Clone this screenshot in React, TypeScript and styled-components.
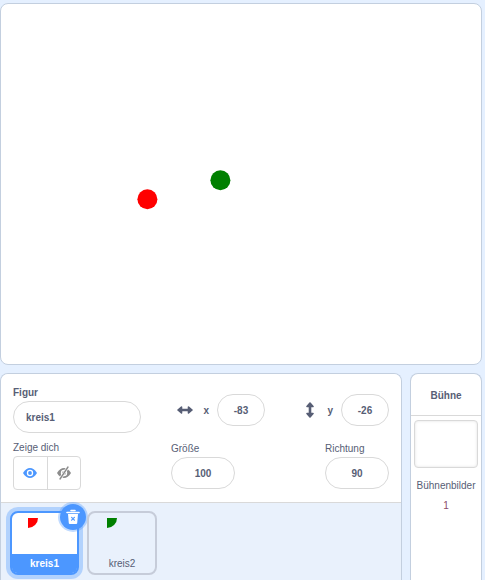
import React from 'react';
import styled, { createGlobalStyle } from 'styled-components';

const GlobalStyle = createGlobalStyle`
  html, body {
    margin: 0;
    padding: 0;
    width: 485px;
    height: 580px;
    overflow: hidden;
    background: #e5f0ff;
    font-family: "Liberation Sans", Arial, sans-serif;
  }
  * {
    box-sizing: border-box;
  }
`;

const Page = styled.div`
  display: flex;
  flex-direction: column;
  gap: 8px;
  width: 485px;
  height: 580px;
  padding: 3px 3px 0 0;
`;

const Stage = styled.div`
  position: relative;
  width: 482px;
  height: 362px;
  flex-shrink: 0;
  background: #fff;
  border: 1px solid #c3cfdf;
  border-radius: 8px;
`;

const Sprite = styled.div<{ $left: number; $top: number; $color: string }>`
  position: absolute;
  left: ${(p) => p.$left}px;
  top: ${(p) => p.$top}px;
  width: 20px;
  height: 20px;
  border-radius: 50%;
  background: ${(p) => p.$color};
  transform: translate(0.4px, 0.3px);
`;

const Bottom = styled.div`
  display: flex;
  gap: 8px;
  flex: 1;
  min-height: 0;
`;

const SpritePane = styled.div`
  display: flex;
  flex-direction: column;
  width: 402px;
  background: #e9f1fc;
  border: 1px solid #c3cfdf;
  border-bottom: none;
  border-radius: 8px 8px 0 0;
  overflow: hidden;
`;

const Info = styled.div`
  display: flex;
  flex-direction: column;
  gap: 8px;
  height: 129px;
  flex-shrink: 0;
  padding: 12px 12px 0;
  background: #fff;
  border-bottom: 1px solid #d9d9d9;
`;

const InfoRow = styled.div`
  display: flex;
  align-items: flex-start;
`;

const Field = styled.div<{ $width: number; $drop?: number }>`
  display: flex;
  flex-direction: column;
  gap: 2px;
  width: ${(p) => p.$width}px;
  margin-top: ${(p) => p.$drop ?? 0}px;
  flex-shrink: 0;
`;

const Label = styled.span`
  font-size: 10px;
  line-height: 13px;
  color: #575e75;
`;

const StrongLabel = styled(Label)`
  font-weight: 700;
`;

const Pill = styled.div<{ $width: number; $center?: boolean }>`
  display: flex;
  align-items: center;
  justify-content: ${(p) => (p.$center === false ? 'flex-start' : 'center')};
  width: ${(p) => p.$width}px;
  height: 32px;
  padding: 0 ${(p) => (p.$center === false ? 12 : 0)}px;
  border: 1px solid #d9d9d9;
  border-radius: 16px;
  background: #fff;
  font-size: 10px;
  font-weight: 700;
  color: #575e75;
`;

const Axis = styled.div<{ $width: number }>`
  display: flex;
  align-items: center;
  justify-content: flex-end;
  width: ${(p) => p.$width}px;
  margin-top: 8px;
`;

const AxisIcon = styled.svg`
  flex-shrink: 0;
`;

const AxisLetter = styled.span<{ $gap: number }>`
  margin: 0 8px 0 ${(p) => p.$gap}px;
  font-size: 10px;
  font-weight: 700;
  color: #575e75;
`;

const ToggleGroup = styled.div`
  display: flex;
  width: 68px;
  height: 34px;
  border: 1px solid #d9d9d9;
  border-radius: 4px;
`;

const Toggle = styled.div`
  display: flex;
  align-items: center;
  justify-content: center;
  flex: 1;
  & + & {
    border-left: 1px solid #d9d9d9;
  }
`;

const SpriteList = styled.div`
  display: flex;
  gap: 8px;
  padding: 8px 0 0 9px;
`;

const Tile = styled.div<{ $selected?: boolean }>`
  position: relative;
  display: flex;
  flex-direction: column;
  width: ${(p) => (p.$selected ? 69 : 70)}px;
  height: 64px;
  border: 2px solid ${(p) => (p.$selected ? '#4c97ff' : '#c6ccd9')};
  border-radius: 8px;
  background: ${(p) => (p.$selected ? '#fff' : 'transparent')};
  box-shadow: ${(p) => (p.$selected ? '0 0 0 4px rgba(76, 151, 255, 0.35)' : 'none')};
`;

const Thumb = styled.div<{ $inset: number }>`
  flex: 1;
  padding: 5px 0 0 ${(p) => p.$inset}px;
`;

const Quarter = styled.div<{ $color: string }>`
  width: 10px;
  height: 10px;
  background: ${(p) => p.$color};
  border-radius: 0 0 10px 0;
`;

const TileName = styled.div<{ $selected?: boolean }>`
  height: 19px;
  line-height: 19px;
  text-align: center;
  font-size: 10px;
  font-weight: ${(p) => (p.$selected ? 700 : 400)};
  color: ${(p) => (p.$selected ? '#fff' : '#575e75')};
  background: ${(p) => (p.$selected ? '#4c97ff' : 'transparent')};
  border-radius: 0 0 5px 5px;
`;

const Delete = styled.div`
  position: absolute;
  top: -9px;
  right: -9px;
  display: flex;
  align-items: center;
  justify-content: center;
  width: 26px;
  height: 26px;
  border-radius: 50%;
  background: #4c97ff;
  box-shadow: 0 0 0 2px rgba(76, 151, 255, 0.35);
`;

const StagePane = styled.div`
  display: flex;
  flex-direction: column;
  align-items: center;
  width: 72px;
  background: #fff;
  border: 1px solid #c3cfdf;
  border-bottom: none;
  border-radius: 8px 8px 0 0;
`;

const StageTitle = styled.div`
  display: flex;
  align-items: center;
  justify-content: center;
  align-self: stretch;
  height: 42px;
  padding-top: 1px;
  border-bottom: 1px solid #d9d9d9;
  font-size: 10px;
  font-weight: 700;
  color: #575e75;
`;

const Backdrop = styled.div`
  width: 64px;
  height: 48px;
  margin-top: 4px;
  border: 1px solid #d9d9d9;
  border-radius: 4px;
  box-shadow: inset 0 0 3px rgba(0, 0, 0, 0.12);
`;

const BackdropLabel = styled.div`
  margin-top: 12px;
  font-size: 10px;
  color: #575e75;
`;

const BackdropCount = styled.div`
  margin-top: 9px;
  font-size: 10px;
  color: #8a4a6a;
`;

const HArrows = () => (
  <AxisIcon width="16" height="10" viewBox="0 0 16 10">
    <path d="M3 5h10" stroke="#575e75" strokeWidth="2.6" />
    <path d="M4.500 2 1 5l3.500 3zM11.500 2 15 5l-3.500 3z" fill="#575e75" stroke="#575e75" strokeWidth="1.6" strokeLinejoin="round" />
  </AxisIcon>
);

const VArrows = () => (
  <AxisIcon width="10" height="16" viewBox="0 0 10 16">
    <path d="M5 3v10" stroke="#575e75" strokeWidth="2.6" />
    <path d="M2 4.500 5 1l3 3.500zM2 11.500 5 15l3-3.500z" fill="#575e75" stroke="#575e75" strokeWidth="1.6" strokeLinejoin="round" />
  </AxisIcon>
);

const EyeOpen = () => (
  <svg width="14" height="10" viewBox="0 0 14 10">
    <path d="M0 5C2 1.500 4.500 0 7 0s5 1.500 7 5c-2 3.500-4.500 5-7 5S2 8.500 0 5z" fill="#4c97ff" />
    <circle cx="7" cy="5" r="3.200" fill="#fff" />
    <circle cx="7" cy="5" r="1.900" fill="#4c97ff" />
  </svg>
);

const EyeClosed = () => (
  <svg width="14" height="14" viewBox="0 0 14 14">
    <path d="M0 7C2 3.500 4.500 2 7 2s5 1.500 7 5c-2 3.500-4.500 5-7 5S2 10.500 0 7z" fill="#8c8c8c" />
    <circle cx="7" cy="7" r="3.200" fill="#fff" />
    <circle cx="7" cy="7" r="1.900" fill="#8c8c8c" />
    <path d="M11 1 3 13" stroke="#fff" strokeWidth="2.800" />
    <path d="M11 1 3 13" stroke="#8c8c8c" strokeWidth="1.400" strokeLinecap="round" />
  </svg>
);

const TrashIcon = () => (
  <svg width="14" height="16" viewBox="0 0 14 16">
    <path d="M5 1.500h4M1 3.500h12" stroke="#fff" strokeWidth="1.600" strokeLinecap="round" />
    <path d="M2 5h10l-.8 9.200a1 1 0 0 1-1 .8H3.800a1 1 0 0 1-1-.8z" fill="#fff" />
    <path d="M5.600 8.400l2.800 2.800M8.400 8.400l-2.800 2.800" stroke="#4c97ff" strokeWidth="1.200" strokeLinecap="round" />
  </svg>
);

const App = () => (
  <>
    <GlobalStyle />
    <Page>
      <Stage>
        <Sprite $left={136} $top={185} $color="#ff0000" />
        <Sprite $left={209} $top={166} $color="#008000" />
      </Stage>
      <Bottom>
        <SpritePane>
          <Info>
            <InfoRow>
              <Field $width={164}>
                <StrongLabel>Figur</StrongLabel>
                <Pill $width={128} $center={false}>kreis1</Pill>
              </Field>
              <Axis $width={88}>
                <HArrows />
                <AxisLetter $gap={10}>x</AxisLetter>
                <Pill $width={48}>-83</Pill>
              </Axis>
              <Axis $width={124}>
                <VArrows />
                <AxisLetter $gap={12}>y</AxisLetter>
                <Pill $width={48}>-26</Pill>
              </Axis>
            </InfoRow>
            <InfoRow>
              <Field $width={158}>
                <Label>Zeige dich</Label>
                <ToggleGroup>
                  <Toggle><EyeOpen /></Toggle>
                  <Toggle><EyeClosed /></Toggle>
                </ToggleGroup>
              </Field>
              <Field $width={154} $drop={1}>
                <Label>Größe</Label>
                <Pill $width={64}>100</Pill>
              </Field>
              <Field $width={64} $drop={1}>
                <Label>Richtung</Label>
                <Pill $width={64}>90</Pill>
              </Field>
            </InfoRow>
          </Info>
          <SpriteList>
            <Tile $selected>
              <Thumb $inset={16}><Quarter $color="#ff0000" /></Thumb>
              <TileName $selected>kreis1</TileName>
              <Delete><TrashIcon /></Delete>
            </Tile>
            <Tile>
              <Thumb $inset={18}><Quarter $color="#008000" /></Thumb>
              <TileName>kreis2</TileName>
            </Tile>
          </SpriteList>
        </SpritePane>
        <StagePane>
          <StageTitle>Bühne</StageTitle>
          <Backdrop />
          <BackdropLabel>Bühnenbilder</BackdropLabel>
          <BackdropCount>1</BackdropCount>
        </StagePane>
      </Bottom>
    </Page>
  </>
);

export default App;
